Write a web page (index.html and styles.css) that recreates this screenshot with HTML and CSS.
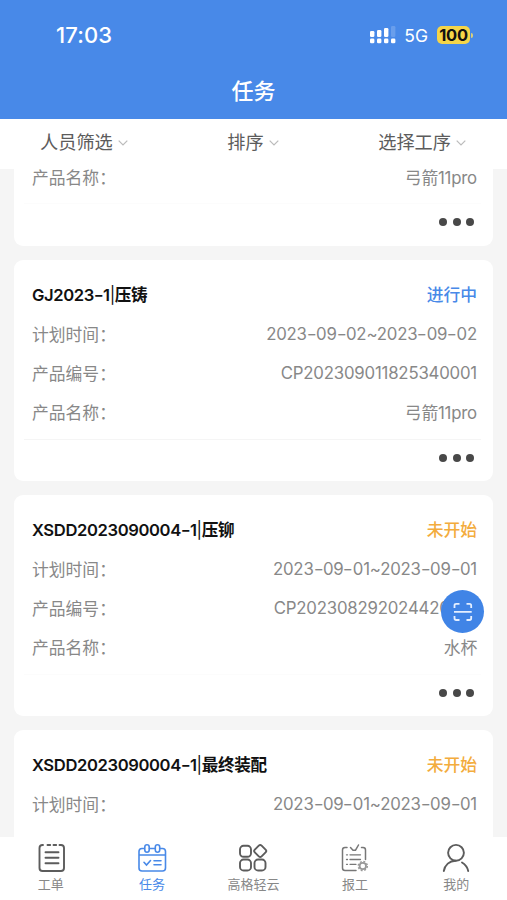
FILE: index.html
```html
<!DOCTYPE html>
<html lang="zh-CN">
<head>
<meta charset="utf-8">
<meta name="viewport" content="width=device-width, initial-scale=1">
<title>任务</title>
<link rel="stylesheet" href="styles.css">
</head>
<body>
<div class="app">
  <header class="header">
    <div class="status">
      <span class="time">17:03</span>
      <div class="status-right">
        <svg class="signal" width="26" height="18" viewBox="0 0 26 18" fill="#fff">
          <rect x="0" y="5" width="4.400" height="6" rx="1.3"/><rect x="7" y="4" width="4.400" height="7" rx="1.3"/><rect x="14" y="2" width="4.400" height="9" rx="1.3"/><rect x="21" y="0" width="4.400" height="11" rx="1.3" opacity=".18"/>
          <rect x="0" y="12.500" width="4.400" height="4.800" rx="1.3"/><rect x="7" y="12.500" width="4.400" height="4.800" rx="1.3"/><rect x="14" y="12.500" width="4.400" height="4.800" rx="1.3"/><rect x="21" y="12.500" width="4.400" height="4.800" rx="1.3"/>
        </svg>
        <span class="network">5G</span>
        <span class="battery">100</span><span class="battery-cap"></span>
      </div>
    </div>
    <h1 class="title">任务</h1>
  </header>

  <nav class="filters">
    <span class="filter">人员筛选<svg class="chev" viewBox="0 0 10 6"><path d="M.7.7 5 5 9.3.7"/></svg></span>
    <span class="filter">排序<svg class="chev" viewBox="0 0 10 6"><path d="M.7.7 5 5 9.3.7"/></svg></span>
    <span class="filter">选择工序<svg class="chev" viewBox="0 0 10 6"><path d="M.7.7 5 5 9.3.7"/></svg></span>
  </nav>

  <main class="list">
    <section class="card card-first">
      <div class="row"><span>产品名称：</span><span class="value">弓箭11pro</span></div>
      <div class="more"><i></i><i></i><i></i></div>
    </section>
    <section class="card">
      <div class="card-head"><h2>GJ2023<b class="dash">-</b>1<b class="bar">|</b>压铸</h2><span class="state doing">进行中</span></div>
      <div class="row"><span>计划时间：</span><span class="value">2023<b class="dash">-</b>09<b class="dash">-</b>02~2023<b class="dash">-</b>09<b class="dash">-</b>02</span></div>
      <div class="row"><span>产品编号：</span><span class="value">CP202309011825340001</span></div>
      <div class="row"><span>产品名称：</span><span class="value">弓箭11pro</span></div>
      <div class="more lined"><i></i><i></i><i></i></div>
    </section>
    <section class="card">
      <div class="card-head"><h2>XSDD2023090004<b class="dash">-</b>1<b class="bar">|</b>压铆</h2><span class="state">未开始</span></div>
      <div class="row"><span>计划时间：</span><span class="value">2023<b class="dash">-</b>09<b class="dash">-</b>01~2023<b class="dash">-</b>09<b class="dash">-</b>01</span></div>
      <div class="row"><span>产品编号：</span><span class="value">CP202308292024420001</span></div>
      <div class="row"><span>产品名称：</span><span class="value">水杯</span></div>
      <div class="more"><i></i><i></i><i></i></div>
    </section>
    <section class="card">
      <div class="card-head"><h2>XSDD2023090004<b class="dash">-</b>1<b class="bar">|</b>最终装配</h2><span class="state">未开始</span></div>
      <div class="row"><span>计划时间：</span><span class="value">2023<b class="dash">-</b>09<b class="dash">-</b>01~2023<b class="dash">-</b>09<b class="dash">-</b>01</span></div>
    </section>
  </main>

  <footer class="tabs">
    <div class="tab">
      <svg viewBox="0 0 30 30"><g stroke-width="1.9"><path d="M7 2H6.500Q3.500 2 3.500 5V25Q3.500 28 6.500 28H25Q28 28 28 25V5Q28 2 25 2H23.500M11.500 2H14.200M17.500 2H20.200"/><path d="M9.500 9.300H22.500M9.500 14.800H22.500M9.500 20.300H22.500"/></g></svg>
      <span>工单</span>
    </div>
    <div class="tab active">
      <svg viewBox="0 0 30 30"><g stroke-width="1.6"><path d="M7 5.500H5Q2 5.500 2 8.500V25Q2 28 5 28H25.500Q28.500 28 28.500 25V8.500Q28.500 5.500 25.500 5.500H23M12.500 5.500H18M2 12H28.500"/><rect x="7.800" y="1.700" width="4.400" height="7.600" rx="2.200"/><rect x="18.300" y="1.700" width="4.400" height="7.600" rx="2.200"/><path d="M7 19.300 9.500 22 13.500 17.500M17 17.800H24M17 21.800H24"/></g></svg>
      <span>任务</span>
    </div>
    <div class="tab">
      <svg viewBox="0 0 30 30"><g stroke-width="1.900"><rect x="2" y="2.800" width="11" height="11" rx="3.600"/><rect x="2" y="16.500" width="11" height="11" rx="3.600"/><rect x="16.500" y="16.500" width="11" height="11" rx="3.600"/><rect x="17.400" y="3.200" width="9.600" height="9.600" rx="2" transform="rotate(45 22.200 8)"/></g></svg>
      <span>高格轻云</span>
    </div>
    <div class="tab">
      <svg class="soft" viewBox="0 0 30 30"><g stroke-width="1.500"><path d="M7 4.500H5Q2.500 4.500 2.500 7V25Q2.500 27.500 5 27.500H16M21.500 4.500H23Q25.500 4.500 25.500 7V16.500M10.500 4.500 13 7.200H15.500L18.500 2"/><path d="M6.500 11.800H7.500M10 11.800H20.500M6.500 16.500H7.500M10 16.500H20.500M6.500 21.300H7.500M10 21.300H16" stroke-width="1.300"/></g><circle cx="22.800" cy="23" r="3.200" stroke="#999" stroke-width="1.800"/><circle cx="22.800" cy="23" r="4.500" stroke="#999" stroke-width="1.500" stroke-linecap="butt" stroke-dasharray="1.900 1.634"/></svg>
      <span>报工</span>
    </div>
    <div class="tab">
      <svg viewBox="0 0 30 30"><g stroke-width="1.900"><circle cx="15" cy="9.800" r="7.900"/><path d="M2.800 28C3.800 22 8.500 17.800 14.500 17.700M21 19.500C24 21.300 26.500 24.500 27.200 28"/></g></svg>
      <span>我的</span>
    </div>
  </footer>

  <button class="scan" aria-label="扫码"><svg width="20" height="20" viewBox="0 0 20 20"><path d="M1.500 6V3.500Q1.500 1.800 3.200 1.800H6.500M13.500 1.800H16.500Q18.200 1.800 18.200 3.500V6M1.500 14V16.300Q1.500 18 3.200 18H6.500M13.500 18H16.500Q18.200 18 18.200 16.300V14M1 9.800H18.700"/></svg></button>
</div>
</body>
</html>
```
FILE: styles.css
```css
* { box-sizing: border-box; }
body {
  margin: 0;
  font-family: Inter, "Noto Sans CJK SC", sans-serif;
  background: #f5f5f5;
}
.app {
  position: relative;
  display: flex;
  flex-direction: column;
  width: 507px;
  height: 900px;
  overflow: hidden;
}
.header {
  flex: none;
  height: 119px;
  background: #4889e8;
  color: #fff;
}
.status {
  display: flex;
  align-items: center;
  justify-content: space-between;
  height: 70px;
  padding: 0 34px 0 56px;
}
.time { font-size: 22px; font-weight: 500; letter-spacing: .1px; }
.status-right { display: flex; align-items: center; }
.network { margin-left: 8px; font-size: 17.5px; }
.battery {
  width: 33px;
  height: 18px;
  margin-left: 9px;
  border-radius: 5px;
  background: #f5d548;
  color: #111;
  font-size: 16.5px;
  font-weight: 700;
  letter-spacing: -.3px;
  line-height: 18px;
  text-align: center;
}
.battery-cap {
  width: 2px;
  height: 5px;
  margin-left: 1px;
  border-radius: 0 2px 2px 0;
  background: #d9cf7c;
}
.title {
  margin: 0;
  font-size: 22px;
  font-weight: 500;
  line-height: 42px;
  text-align: center;
}
.filters {
  z-index: 1;
  display: flex;
  flex: none;
  justify-content: space-between;
  height: 50px;
  padding: 1px 41px 0 40px;
  background: #fff;
  color: #5c5c5c;
  font-size: 18.2px;
  line-height: 44px;
}
.filter { display: flex; align-items: center; height: 44px; }
.chev {
  width: 10px;
  height: 6px;
  margin: 2px 0 0 5px;
  fill: none;
  stroke: #bbb;
  stroke-width: 1.2;
}
.list {
  display: flex;
  flex: 1;
  flex-direction: column;
  gap: 14px;
  min-height: 0;
  padding: 0 14px;
  overflow: hidden;
}
.card {
  flex: none;
  height: 221px;
  padding: 14px 16px 0 18px;
  border-radius: 9px;
  background: #fff;
}
.card-first {
  height: 77px;
  padding-top: 0;
  border-radius: 0 0 9px 9px;
}
.card-first .row { height: 34px; padding-bottom: 19px; }
.card-head, .row {
  display: flex;
  align-items: center;
  justify-content: space-between;
  height: 39px;
}
.card-head { height: 40px; padding-bottom: 1px; }
.card-head h2 {
  margin: 0;
  color: #111;
  font-size: 16.6px;
  font-weight: 600;
  letter-spacing: -.38px;
  white-space: nowrap;
}
.state { color: #f3ac3d; font-size: 16.8px; font-weight: 500; }
.doing { color: #4889e8; }
.row { color: #888; font-size: 16.8px; }
.value { letter-spacing: -.2px; }
.dash {
  display: inline-block;
  padding: 0 .9px;
  font-weight: inherit;
  transform: scaleX(1.3);
}
.bar { font-weight: 400; }
.more {
  display: flex;
  align-items: center;
  justify-content: flex-end;
  gap: 5.500px;
  height: 37px;
  margin: 8px -4px 0 -8px;
  padding-right: 7px;
  border-top: 1px solid #fcfcfc;
}
.lined { border-color: #f5f5f5; }
.card-first .more { margin-top: 0; }
.more i {
  width: 8px;
  height: 8px;
  border-radius: 50%;
  background: #484848;
}
.tabs {
  z-index: 1;
  display: grid;
  grid-template-columns: repeat(5, 1fr);
  flex: none;
  height: 63px;
  background: #fff;
  color: #888;
}
.tab {
  display: flex;
  flex-direction: column;
  align-items: center;
  padding-top: 6px;
  font-size: 13px;
  line-height: 18px;
}
.tab svg {
  width: 30px;
  height: 30px;
  margin-bottom: 2px;
  fill: none;
  stroke: #5c5c5c;
  stroke-linecap: round;
}
.tab svg.soft { stroke: #777; }
.tab.active { color: #4889e8; }
.tab.active svg { stroke: #4889e8; }
.scan {
  position: absolute;
  top: 590px;
  left: 441px;
  z-index: 2;
  display: flex;
  align-items: center;
  justify-content: center;
  width: 43px;
  height: 43px;
  padding: 0;
  border: 0;
  border-radius: 50%;
  background: #4084e6;
}
.scan svg { fill: none; stroke: #e5efff; stroke-width: 1.8; }
```
